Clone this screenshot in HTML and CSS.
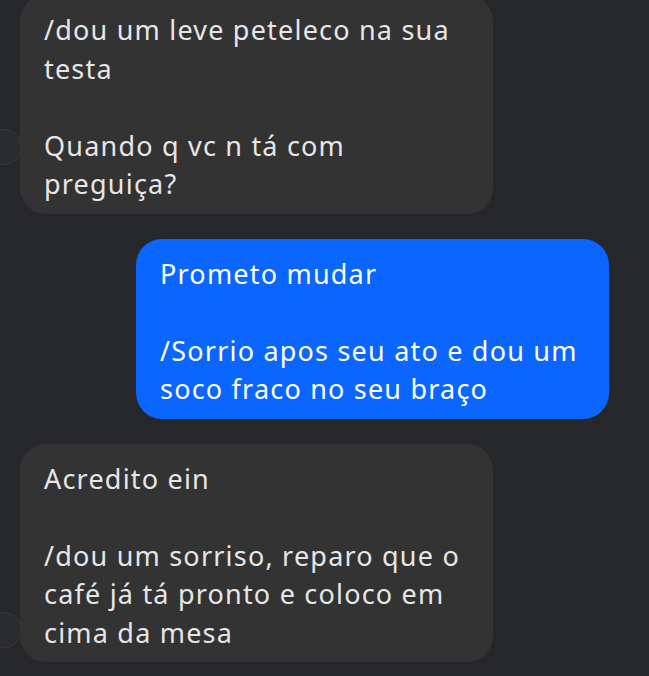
FILE: index.html
```html
<!DOCTYPE html>
<html lang="pt">
<head>
<meta charset="utf-8">
<link rel="stylesheet" href="styles.css">
</head>
<body>
<div class="chat">
  <div class="row row-in first">
    <div class="avatar avatar-a"></div>
    <div class="bubble in">/dou um leve peteleco na sua<br>testa<br><br>Quando q vc n tá com<br>preguiça?</div>
  </div>
  <div class="row row-out">
    <div class="bubble out">Prometo mudar<br><br>/Sorrio apos seu ato e dou um<br>soco fraco no seu braço</div>
  </div>
  <div class="row row-in">
    <div class="avatar avatar-b"></div>
    <div class="bubble in">Acredito ein<br><br>/dou um sorriso, reparo que o<br>café já tá pronto e coloco em<br>cima da mesa</div>
  </div>
</div>
</body>
</html>
```
FILE: styles.css
```css
html, body {
  margin: 0;
  padding: 0;
  background: #26272a;
  height: 100%;
  overflow: hidden;
}
.chat {
  display: flex;
  flex-direction: column;
  gap: 25px;
  padding: 0 40px 0 20px;
  font-family: "Noto Sans", "Open Sans", sans-serif;
  font-size: 27px;
  line-height: 38.5px;
  letter-spacing: 1.2px;
}
.row {
  display: flex;
  position: relative;
}
.row.first {
  margin-top: -5px;
}
.row-out {
  justify-content: flex-end;
}
.bubble {
  width: 473px;
  box-sizing: border-box;
  padding: 16px 24px 10px 24px;
  border-radius: 26px;
  white-space: nowrap;
}
.in {
  background: #333334;
  color: #e6e6e6;
}
.out {
  background: #0a66ff;
  color: #ffffff;
}
.avatar {
  position: absolute;
  left: -34px;
  width: 36px;
  height: 36px;
  border-radius: 50%;
  background: #2b2c2e;
  border: 1px solid #3a3b3d;
  box-sizing: border-box;
}
.avatar-a {
  top: 134px;
}
.avatar-b {
  bottom: 14px;
}
```
